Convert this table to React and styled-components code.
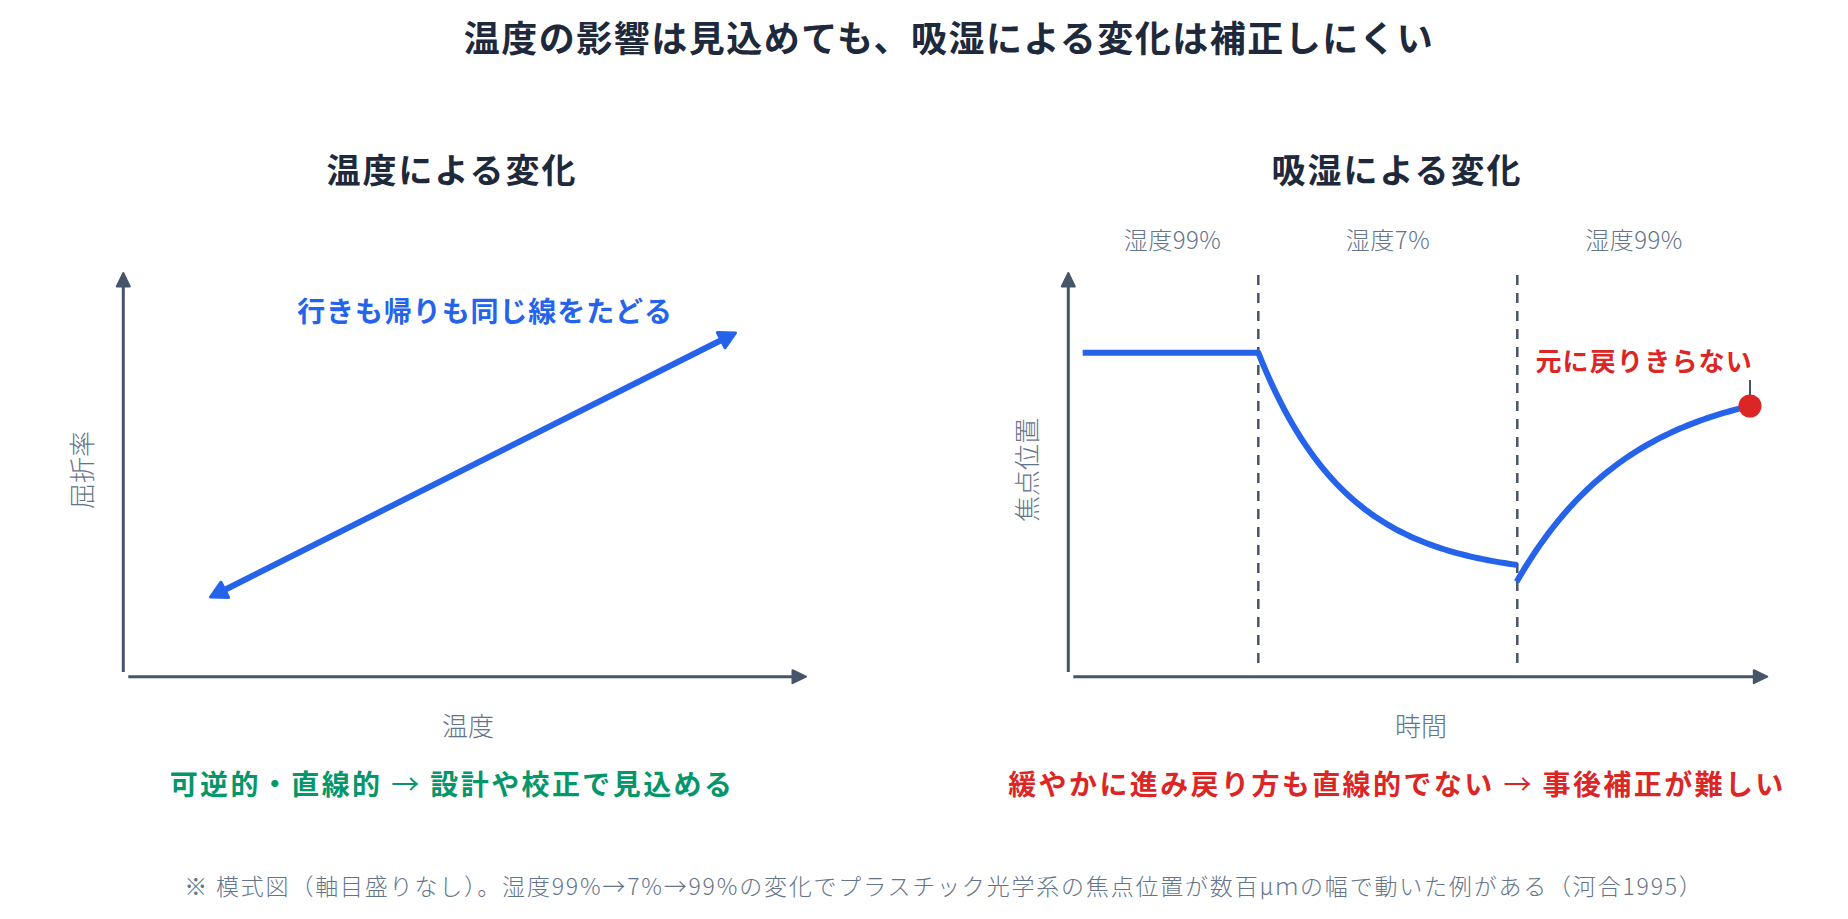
import React from "react";
import styled, { createGlobalStyle } from "styled-components";

const GlobalStyle = createGlobalStyle`
  html, body {
    margin: 0;
    padding: 0;
    background: #ffffff;
  }
  body {
    font-family: "Noto Sans CJK JP", "Noto Sans", sans-serif;
    color: #1e293b;
  }
`;

const COLORS = {
  ink: "#1e293b",
  axis: "#475569",
  muted: "#64748b",
  blue: "#2563eb",
  red: "#dc2626",
  green: "#059669",
};

const Page = styled.div`
  width: 1848px;
  height: 919px;
  box-sizing: border-box;
  padding-top: 14px;
  display: flex;
  flex-direction: column;
  overflow: hidden;
`;

const Title = styled.h1`
  margin: 0;
  padding-left: 50px;
  text-align: center;
  font-size: 36px;
  line-height: 44px;
  font-weight: 700;
  letter-spacing: 1.5px;
  color: ${COLORS.ink};
`;

const Panels = styled.div`
  margin-top: 89px;
  padding-left: 40px;
  display: grid;
  grid-template-columns: 824px 824px;
  column-gap: 121px;
`;

const Panel = styled.section`
  display: flex;
  flex-direction: column;
  align-items: center;
`;

const PanelTitle = styled.h2`
  margin: 0 0 9px;
  font-size: 34px;
  line-height: 44px;
  font-weight: 700;
  letter-spacing: 2px;
  color: ${COLORS.ink};
`;

const Chart = styled.svg`
  display: block;
  width: 824px;
  height: 550px;
  overflow: visible;
`;

const Caption = styled.p`
  margin: 15px 0 0;
  font-size: 28px;
  line-height: 36px;
  font-weight: 700;
  letter-spacing: 2.4px;
  color: ${(p) => p.$color};
`;

const Arrow = styled.span`
  font-weight: 400;
`;

const Footnote = styled.p`
  margin: 69px 0 0;
  padding-left: 40px;
  text-align: center;
  font-size: 23px;
  line-height: 30px;
  font-weight: 300;
  letter-spacing: 1.8px;
  color: ${COLORS.muted};
`;

const AxisLabel = styled.text`
  font-size: 26px;
  font-weight: 300;
  fill: ${COLORS.muted};
`;

const ZoneLabel = styled.text`
  font-size: 24px;
  font-weight: 300;
  letter-spacing: 0.5px;
  fill: ${COLORS.muted};
`;

const Note = styled.text`
  font-size: ${(p) => p.$size}px;
  font-weight: 700;
  letter-spacing: ${(p) => p.$spacing}px;
  fill: ${(p) => p.$color};
`;

function Axes({ xEnd }) {
  return (
    <g>
      <line x1="83.3" y1="472" x2="83.3" y2="84" stroke={COLORS.axis} strokeWidth="3" />
      <polygon
        points="83.3,73 76.8,86.5 89.8,86.5"
        fill={COLORS.axis}
        stroke={COLORS.axis}
        strokeWidth="2"
        strokeLinejoin="round"
      />
      <line x1="88.3" y1="476.7" x2={xEnd - 13} y2="476.7" stroke={COLORS.axis} strokeWidth="3" />
      <polygon
        points={`${xEnd - 1},476.7 ${xEnd - 14.5},470.2 ${xEnd - 14.5},483.2`}
        fill={COLORS.axis}
        stroke={COLORS.axis}
        strokeWidth="2"
        strokeLinejoin="round"
      />
    </g>
  );
}

function arrowHead(tip, dir, len, half) {
  const [tx, ty] = tip;
  const [ux, uy] = dir;
  const bx = tx - ux * len;
  const by = ty - uy * len;
  const nx = -uy;
  const ny = ux;
  return `${tx},${ty} ${bx + nx * half},${by + ny * half} ${bx - nx * half},${by - ny * half}`;
}

function TemperatureChart() {
  const a = [170.5, 397];
  const b = [695.5, 133];
  const dx = b[0] - a[0];
  const dy = b[1] - a[1];
  const L = Math.hypot(dx, dy);
  const u = [dx / L, dy / L];
  const back = [-u[0], -u[1]];
  const len = 16;
  return (
    <Chart viewBox="0 0 824 550">
      <Axes xEnd={767} />
      <line
        x1={a[0] + u[0] * (len - 2)}
        y1={a[1] + u[1] * (len - 2)}
        x2={b[0] - u[0] * (len - 2)}
        y2={b[1] - u[1] * (len - 2)}
        stroke={COLORS.blue}
        strokeWidth="6"
      />
      <polygon
        points={arrowHead(b, u, len, 8.5)}
        fill={COLORS.blue}
        stroke={COLORS.blue}
        strokeWidth="3"
        strokeLinejoin="round"
      />
      <polygon
        points={arrowHead(a, back, len, 8.5)}
        fill={COLORS.blue}
        stroke={COLORS.blue}
        strokeWidth="3"
        strokeLinejoin="round"
      />
      <Note x="445" y="110" textAnchor="middle" dominantBaseline="central" $size={28} $spacing={0.9} $color={COLORS.blue}>
        行きも帰りも同じ線をたどる
      </Note>
      <AxisLabel x="40" y="270" textAnchor="middle" dominantBaseline="central" transform="rotate(-90 40 270)">
        屈折率
      </AxisLabel>
      <AxisLabel x="428" y="524" textAnchor="middle" dominantBaseline="central">
        温度
      </AxisLabel>
    </Chart>
  );
}

function expCurve(x0, y0, x1, y1, k, steps = 60) {
  const pts = [];
  const denom = 1 - Math.exp(-k);
  for (let i = 0; i <= steps; i++) {
    const t = i / steps;
    const f = (1 - Math.exp(-k * t)) / denom;
    pts.push(`${(x0 + (x1 - x0) * t).toFixed(2)},${(y0 + (y1 - y0) * f).toFixed(2)}`);
  }
  return pts;
}

function HumidityChart() {
  const dry = expCurve(273.3, 152.7, 532.3, 365, 2.9);
  const wet = expCurve(531.7, 381.7, 765, 206, 2.0);
  return (
    <Chart viewBox="0 0 824 550">
      <Axes xEnd={783.3} />
      <line x1="273.3" y1="75" x2="273.3" y2="468" stroke={COLORS.axis} strokeWidth="2.5" strokeDasharray="10 8" />
      <line x1="532.3" y1="75" x2="532.3" y2="468" stroke={COLORS.axis} strokeWidth="2.5" strokeDasharray="10 8" />
      <ZoneLabel x="187.5" y="38" textAnchor="middle" dominantBaseline="central">湿度99%</ZoneLabel>
      <ZoneLabel x="403" y="38" textAnchor="middle" dominantBaseline="central">湿度7%</ZoneLabel>
      <ZoneLabel x="649" y="38" textAnchor="middle" dominantBaseline="central">湿度99%</ZoneLabel>
      <path
        d={`M97.7,152.7 L${dry.join(" L")}`}
        fill="none"
        stroke={COLORS.blue}
        strokeWidth="6"
        strokeLinejoin="round"
      />
      <path d={`M${wet.join(" L")}`} fill="none" stroke={COLORS.blue} strokeWidth="6" strokeLinejoin="round" />
      <line x1="765" y1="180" x2="765" y2="196" stroke={COLORS.axis} strokeWidth="2" />
      <circle cx="765" cy="206" r="11.5" fill={COLORS.red} />
      <Note x="768" y="159" textAnchor="end" dominantBaseline="central" $size={26} $spacing={1.2} $color={COLORS.red}>
        元に戻りきらない
      </Note>
      <AxisLabel x="40" y="270" textAnchor="middle" dominantBaseline="central" transform="rotate(-90 40 270)">
        焦点位置
      </AxisLabel>
      <AxisLabel x="436" y="524" textAnchor="middle" dominantBaseline="central">
        時間
      </AxisLabel>
    </Chart>
  );
}

export default function App() {
  return (
    <>
      <GlobalStyle />
      <Page>
        <Title>温度の影響は見込めても、吸湿による変化は補正しにくい</Title>
        <Panels>
          <Panel>
            <PanelTitle>温度による変化</PanelTitle>
            <TemperatureChart />
            <Caption $color={COLORS.green}>
              可逆的・直線的 <Arrow>→</Arrow> 設計や校正で見込める
            </Caption>
          </Panel>
          <Panel>
            <PanelTitle>吸湿による変化</PanelTitle>
            <HumidityChart />
            <Caption $color={COLORS.red}>
              緩やかに進み戻り方も直線的でない <Arrow>→</Arrow> 事後補正が難しい
            </Caption>
          </Panel>
        </Panels>
        <Footnote>※ 模式図（軸目盛りなし）。湿度99%→7%→99%の変化でプラスチック光学系の焦点位置が数百μｍの幅で動いた例がある（河合1995）</Footnote>
      </Page>
    </>
  );
}
